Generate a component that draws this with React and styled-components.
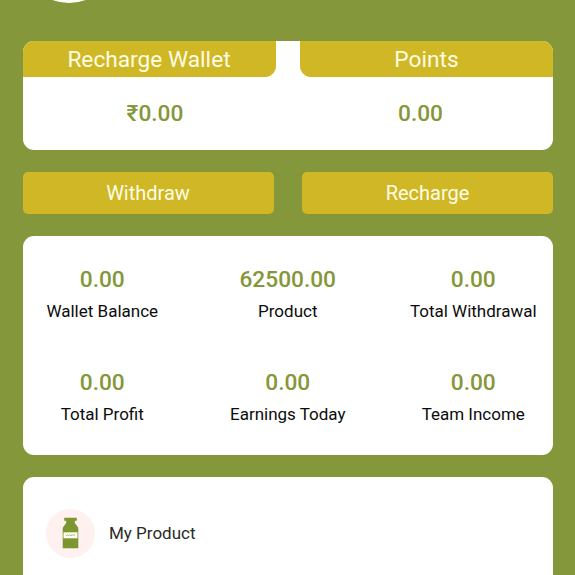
import styled, { createGlobalStyle } from "styled-components";

const GlobalStyle = createGlobalStyle`
  * {
    box-sizing: border-box;
  }
  body {
    margin: 0;
    overflow: hidden;
    background-color: #84973a;
    font-family: Roboto, sans-serif;
  }
`;

const Container = styled.div`
  height: 575px;
  padding: 0 22px 0 22.5px;
  display: flex;
  flex-direction: column;
  overflow: hidden;
  background-color: #84973a;
`;

const Header = styled.div`
  height: 41px;
  flex-shrink: 0;
  display: flex;
  align-items: flex-start;
`;

const Avatar = styled.div`
  width: 96px;
  height: 96px;
  margin: -93px 0 0 -1.5px;
  border-radius: 50%;
  background-color: #fffffa;
`;

const Card = styled.div`
  flex-shrink: 0;
  border-radius: 11px;
  background-color: #fff;
  overflow: hidden;
`;

const WalletCard = styled(Card)`
  height: 108.5px;
  display: flex;
  justify-content: space-between;
`;

const Wallet = styled.div`
  width: 253px;
  text-align: center;
`;

const WalletTitle = styled.div`
  height: 36px;
  line-height: 37px;
  font-size: 22.7px;
  color: #fffde6;
  background-color: #d0b725;
  border-radius: ${(props) =>
    props.$side === "left" ? "0 0 11px 0" : "0 0 0 11px"};
`;

const Amount = styled.div`
  font-size: 22.7px;
  font-weight: 500;
  line-height: 28px;
  color: #84973a;
`;

const WalletAmount = styled(Amount)`
  margin: ${(props) =>
    props.$side === "left" ? "23px 0 0 12px" : "23px 12px 0 0"};
`;

const Actions = styled.div`
  height: 42px;
  margin: 22px 0 22.5px;
  flex-shrink: 0;
  display: flex;
  justify-content: space-between;
`;

const Button = styled.button`
  width: 251px;
  padding: 0;
  border: none;
  border-radius: 5px;
  font-family: inherit;
  font-size: 20px;
  color: #fffde6;
  background-color: #d0b725;
`;

const StatsCard = styled(Card)`
  height: 218.5px;
  padding-top: 30px;
`;

const Stats = styled.div`
  margin: 0 -13px;
  display: grid;
  grid-template-columns: repeat(3, 1fr);
  grid-auto-rows: 103px;
`;

const Stat = styled.div`
  text-align: center;
`;

const Label = styled.div`
  margin-top: 5px;
  font-size: 17px;
  line-height: 24px;
  color: #0c0c0c;
`;

const MenuCard = styled(Card)`
  height: 120px;
  margin-top: 22.5px;
  padding: 31.5px 23.5px;
`;

const MenuItem = styled.div`
  display: flex;
  align-items: center;
  gap: 14px;
  font-size: 17px;
  color: #2a2a2a;
`;

const MenuIcon = styled.div`
  width: 49px;
  height: 49px;
  display: flex;
  align-items: center;
  justify-content: center;
  border-radius: 50%;
  background-color: #fff1f0;
`;

const Bottle = () => (
  <svg width="17" height="32" viewBox="0 0 17 32">
    <path
      d="M2.2 0.700h12.600v3h-2v2.300l3.500 4.800v20.500H.7V10.800L4.200 6V3.700h-2z"
      fill="#7c9630"
    />
    <rect x="1.500" y="15.300" width="14" height="6" fill="#fffff4" />
    <path
      d="M4 18.800l1.500-.7 1 .5 1.300-.7 1.200.7 1.500-.7 1 .4 1.500-.5"
      fill="none"
      stroke="#a9b97e"
      strokeWidth="1"
    />
  </svg>
);

const stats = [
  { value: "0.00", label: "Wallet Balance" },
  { value: "62500.00", label: "Product" },
  { value: "0.00", label: "Total Withdrawal" },
  { value: "0.00", label: "Total Profit" },
  { value: "0.00", label: "Earnings Today" },
  { value: "0.00", label: "Team Income" },
];

const App = () => {
  return (
    <>
      <GlobalStyle />
      <Container>
        <Header>
          <Avatar />
        </Header>
        <WalletCard>
          <Wallet>
            <WalletTitle $side="left">Recharge Wallet</WalletTitle>
            <WalletAmount $side="left">₹0.00</WalletAmount>
          </Wallet>
          <Wallet>
            <WalletTitle $side="right">Points</WalletTitle>
            <WalletAmount $side="right">0.00</WalletAmount>
          </Wallet>
        </WalletCard>
        <Actions>
          <Button>Withdraw</Button>
          <Button>Recharge</Button>
        </Actions>
        <StatsCard>
          <Stats>
            {stats.map((item) => (
              <Stat key={item.label}>
                <Amount>{item.value}</Amount>
                <Label>{item.label}</Label>
              </Stat>
            ))}
          </Stats>
        </StatsCard>
        <MenuCard>
          <MenuItem>
            <MenuIcon>
              <Bottle />
            </MenuIcon>
            My Product
          </MenuItem>
        </MenuCard>
      </Container>
    </>
  );
};

export default App;
